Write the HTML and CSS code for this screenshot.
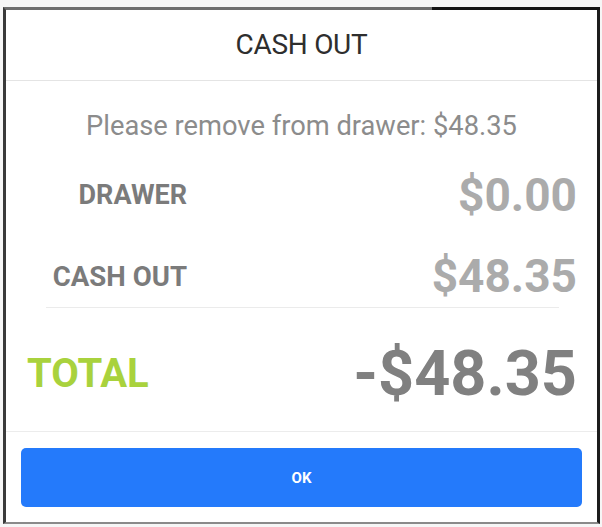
FILE: index.html
```html
<!DOCTYPE html>
<html>
<head>
<meta charset="utf-8">
<link rel="stylesheet" href="styles.css">
</head>
<body>
<div class="dialog">
  <div class="header">CASH OUT</div>
  <div class="content">
    <div class="msg">Please remove from drawer: $48.35</div>
    <div class="row row-drawer">
      <span class="label">DRAWER</span>
      <span class="value">$0.00</span>
    </div>
    <div class="row row-cash">
      <span class="label">CASH OUT</span>
      <span class="value">$48.35</span>
    </div>
    <div class="total">
      <span class="total-label">TOTAL</span>
      <span class="total-value">-$48.35</span>
    </div>
  </div>
  <div class="footer">
    <button class="ok">OK</button>
  </div>
</div>
</body>
</html>
```

FILE: styles.css
```css
html, body {
  margin: 0;
  padding: 0;
  background: #f6f6f6;
}
body {
  padding: 7px 0 0 3px;
  font-family: Roboto, "Liberation Sans", sans-serif;
}
.dialog {
  position: relative;
  box-sizing: border-box;
  width: 597px;
  height: 517px;
  background: #fff;
  border-style: solid;
  border-width: 3px 3px 2px 3px;
  border-color: #6e6e6e #1c1c1c #8a8a8a #3a3a3a;
  display: flex;
  flex-direction: column;
}
.dialog::before {
  content: "";
  position: absolute;
  top: -3px;
  right: -3px;
  width: 168px;
  height: 3px;
  background: #141414;
}
.header {
  height: 70px;
  line-height: 70px;
  text-align: center;
  font-size: 28px;
  color: #2e2e2e;
  border-bottom: 1px solid #e4e4e4;
  letter-spacing: -0.3px;
}
.content {
  flex: 1;
  padding-top: 29px;
  border-bottom: 1px solid #ececec;
}
.msg {
  text-align: center;
  font-size: 27.3px;
  line-height: 32px;
  color: #8c8c8c;
}
.row {
  display: flex;
  align-items: center;
  height: 56px;
  font-weight: bold;
}
.row-drawer {
  margin-top: 25px;
  padding-right: 20px;
}
.row-cash {
  margin: 25px 38px 0 40px;
  padding-bottom: 3px;
  border-bottom: 1px solid #ebebeb;
}
.row-cash .label {
  width: 141px;
  font-size: 27.6px;
}
.label {
  width: 181px;
  text-align: right;
  font-size: 27px;
  color: #7b7b7b;
}
.value {
  margin-left: auto;
  font-size: 46px;
  color: #ababab;
}
.row-cash .value {
  margin-right: -18px;
}
.total {
  display: flex;
  align-items: center;
  height: 70px;
  margin-top: 30px;
  padding: 0 20px 0 21px;
  font-weight: bold;
}
.total-label {
  font-size: 40px;
  color: #a9d23d;
}
.total-value {
  margin-left: auto;
  font-size: 63px;
  color: #808080;
}
.footer {
  padding: 16px 15px 15px;
}
.ok {
  display: block;
  width: 100%;
  height: 59px;
  border: none;
  border-radius: 5px;
  background: #247afb;
  color: #fff;
  font-family: Roboto, "Liberation Sans", sans-serif;
  font-weight: bold;
  font-size: 15px;
}
```
